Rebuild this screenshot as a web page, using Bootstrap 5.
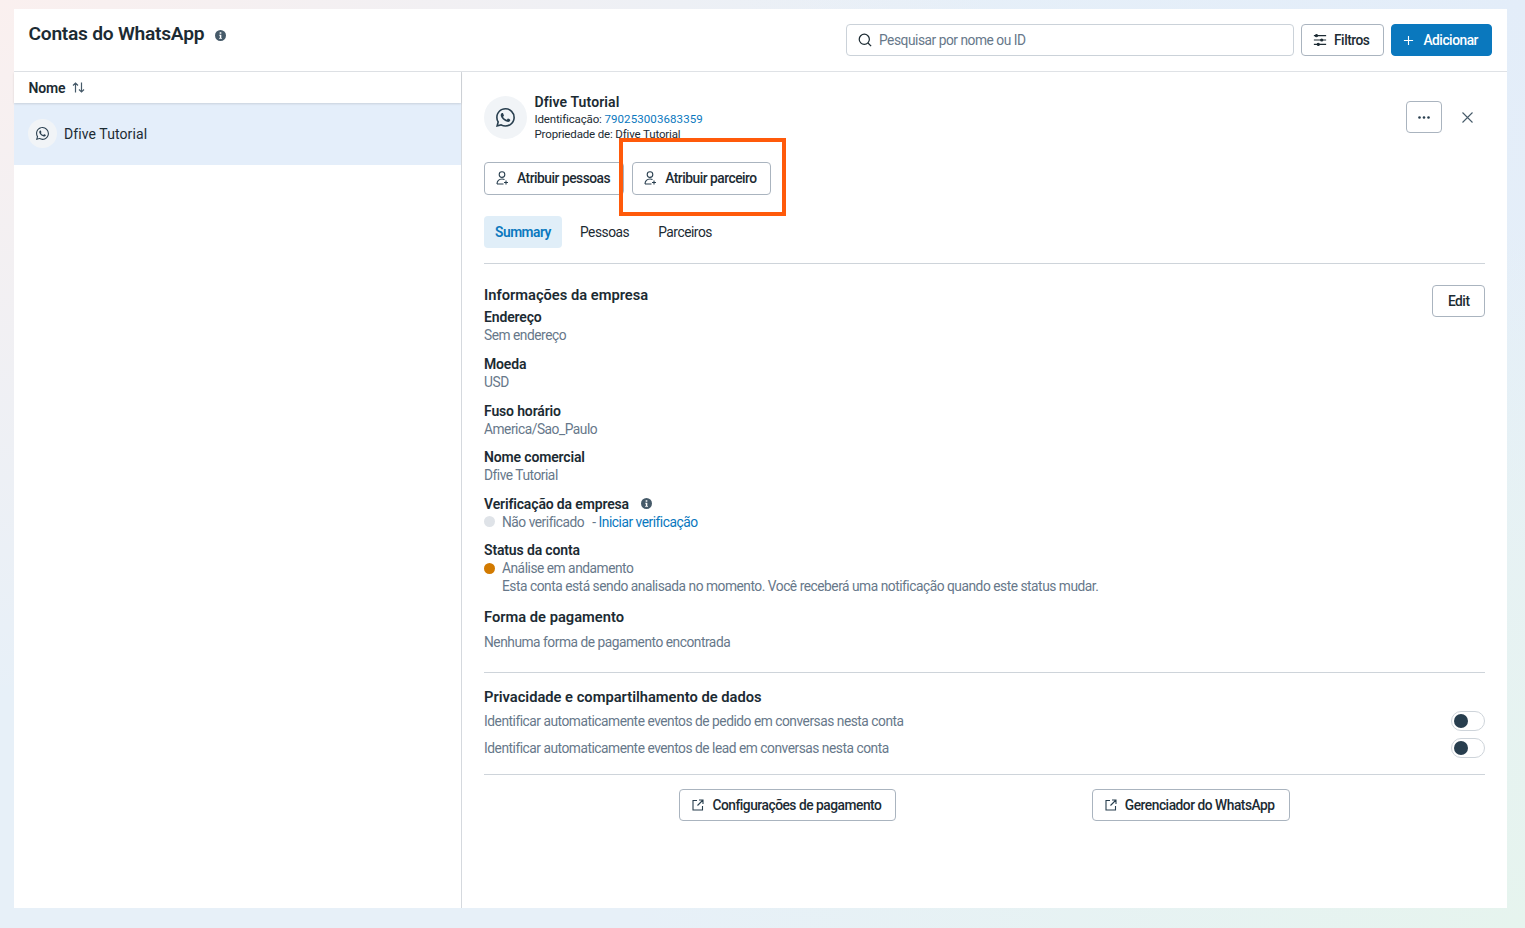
<!DOCTYPE html>
<html lang="pt-BR">
<head>
<meta charset="utf-8">
<title>Contas do WhatsApp</title>
<link href="https://cdn.jsdelivr.net/npm/bootstrap@5.3.0/dist/css/bootstrap.min.css" rel="stylesheet">
<style>
html,body{height:100%}
body{font-family:Roboto,"Noto Sans",sans-serif;font-size:13.75px;line-height:18px;letter-spacing:-.47px;color:#1c2b33;padding:9px 18px 20px 14px;overflow:hidden;
 background:radial-gradient(1000px 700px at 0 0,#faf0ef,transparent),radial-gradient(900px 700px at 100% 100%,#e6f4ee,transparent),radial-gradient(800px 600px at 100% 0,#e3edf9,transparent),#e7f0f8}
.panel{height:899px;background:#fff;position:relative}
.top-bar{height:63px;border-bottom:1px solid #dfe2e6;padding:15px 15px 0 14.5px}
.title-wrap{gap:11px}
.page-title{font-size:19.2px;line-height:20px;font-weight:600;letter-spacing:-.25px;margin:0}
.title-info{margin-top:3px}
.top-tools{gap:7px}
.search-box{width:448px;height:32px;border:1px solid #cbd2d9;border-radius:4px;padding:0 11px;color:#67788a}
.search-box svg{margin-right:-1px}
.act-btn{height:32px;display:inline-flex;align-items:center;gap:8px;padding:0 13px 0 11px;font-size:13.75px;line-height:18px;letter-spacing:-.47px;font-weight:500;color:#1c2b33;background:#fff;border:1px solid #aab4bf;border-radius:4px}
.act-btn:hover{color:#1c2b33;background:#fff;border-color:#aab4bf}
.btn-filter{padding:0 14px 0 11px;gap:7px}
.add-btn{background:#0a78be;border-color:#0a78be;color:#fff;gap:9px}
.add-btn:hover{background:#0a78be;border-color:#0a78be;color:#fff}
.btn-tall{height:33px}
.btn-square{width:36px;padding:0;justify-content:center}
.btn-edit{padding:0 14.5px}
.btn-out{padding:0 14px 0 12px}
.side{width:448px;border-right:1px solid #d5d9de}
.side-head{height:31px;padding-left:14.5px;font-size:14px;letter-spacing:-.2px;font-weight:600;box-shadow:0 1px 2px rgba(0,0,0,.12);position:relative;gap:7px}
.side-row{height:62px;background:#e4eefa;padding:0 0 1px 14px;gap:7px;color:#1c2b33;font-size:14px;letter-spacing:.1px}
.wa-small{width:29px;height:29px;border-radius:50%;background:#f1f4f7}
.detail{padding:24px 22px 0;position:relative}
.acct-head{gap:7.5px}
.wa-big{width:43px;height:43px;border-radius:50%;background:#f1f4f7}
.acct-name{font-size:14px;font-weight:600;letter-spacing:.1px;line-height:16px;margin:-2px 0 1.5px}
.acct-meta{font-size:11.5px;line-height:15px;letter-spacing:-.15px}
.acct-meta a{letter-spacing:.1px}
.acct-meta a,.blue-link{color:#0a78be;text-decoration:none}
.head-tools{margin:5px 12px 0 0;gap:20px}
.assign-row{margin-top:20px;gap:8px}
.marker{position:absolute;left:157px;top:66px;width:167px;height:78px;border:4px solid #ff5a0a;pointer-events:none}
.tabs-row{margin-top:21px;padding-bottom:15px;border-bottom:1px solid #ced4da}
.tab-item{height:32px;display:flex;align-items:center;color:#1c2b33;text-decoration:none}
.tab-on{width:78px;justify-content:center;background:#e0eef8;color:#0a78be;font-weight:600;border-radius:4px;margin-right:18px}
.tab-two{margin-right:29px}
.info-zone{padding-top:21px;position:relative}
.edit-pos{position:absolute;right:0;top:21px}
.sec-title{font-weight:600;line-height:20px;font-size:14.7px;letter-spacing:0}
.fld{margin-bottom:10.6px}
.fld-first{margin:3px 0 11.600px}
.fld-name{font-size:14px;font-weight:600;letter-spacing:-.15px;line-height:18px}
.fld-val{color:#67788a;line-height:18px}
.dot{width:11px;height:11px;border-radius:50%;margin-right:7px;flex:none}
.dot-grey{background:#dfe3e8}
.dot-orange{background:#d27a00}
.indent{padding-left:18px}
.pay-title{margin-top:12px}
.pay-val{margin-top:6px}
.rule{border-top:1px solid #ced4da}
.rule-privacy{margin-top:21px;padding-top:14px}
.rule-links{margin-top:13px;padding-top:14px}
.toggle-row{height:27px}
.sw{width:34px;height:20px;border:1px solid #ced4da;border-radius:10px;padding:2px 0 0 2px;background:#fff}
.sw-knob{width:14px;height:14px;border-radius:50%;background:#283e4e;display:block}
.svg-ico{display:block;flex:none}
.detail-body{height:836px}
</style>
</head>
<body>
<div class="panel">
  <header class="top-bar d-flex justify-content-between align-items-start">
    <div class="title-wrap d-flex align-items-center">
      <h1 class="page-title">Contas do WhatsApp</h1>
      <svg class="svg-ico title-info" width="11" height="11" viewBox="0 0 16 16" fill="#465a69"><path d="M8 0a8 8 0 1 0 0 16A8 8 0 0 0 8 0zm1.200 3.400v2.100H6.800V3.400zM6.200 7h3v4.600h1v1.300H6v-1.300h1V8.300h-.8z"/></svg>
    </div>
    <div class="top-tools d-flex align-items-center">
      <div class="search-box d-flex align-items-center gap-2">
        <svg class="svg-ico" width="14" height="14" viewBox="0 0 16 16" fill="none" stroke="#1c2b33" stroke-width="1.4"><circle cx="7.200" cy="7.200" r="5.800"/><path d="M11.400 11.400 15 15"/></svg>
        <span>Pesquisar por nome ou ID</span>
      </div>
      <button class="btn act-btn btn-filter" type="button">
        <svg class="svg-ico" width="14" height="14" viewBox="0 0 16 16" fill="#1c2b33" stroke="#1c2b33" stroke-width="1.200"><path d="M1 3h14M1 8h14M1 13h14"/><circle cx="4" cy="3" r="1.200"/><circle cx="10" cy="8" r="1.200"/><circle cx="6" cy="13" r="1.200"/></svg>
        Filtros
      </button>
      <button class="btn act-btn add-btn" type="button">
        <svg class="svg-ico" width="11" height="11" viewBox="0 0 12 12" stroke="#fff" stroke-width="1.200"><path d="M6 1v10M1 6h10"/></svg>
        Adicionar
      </button>
    </div>
  </header>

  <div class="detail-body d-flex">
    <aside class="side flex-shrink-0">
      <div class="side-head d-flex align-items-center">
        <span>Nome</span>
        <svg class="svg-ico" width="13" height="11" viewBox="0 0 13 11" fill="none" stroke="#465a69" stroke-width="1.200"><path d="M3.500 10.500V1M1 3.500 3.500 1 6 3.500M9.500 .5V10M7 7.500 9.500 10 12 7.500"/></svg>
      </div>
      <div class="side-row d-flex align-items-center">
        <span class="wa-small d-flex align-items-center justify-content-center">
          <svg class="svg-ico" width="13" height="13" viewBox="0 0 16 16" fill="#283e4e"><path d="M13.601 2.326A7.854 7.854 0 0 0 7.994 0C3.627 0 .068 3.558.064 7.926c0 1.399.366 2.76 1.057 3.965L0 16l4.204-1.102a7.933 7.933 0 0 0 3.79.965h.004c4.368 0 7.926-3.558 7.93-7.93A7.898 7.898 0 0 0 13.6 2.326zM7.994 14.521a6.573 6.573 0 0 1-3.356-.92l-.24-.144-2.494.654.666-2.433-.156-.251a6.56 6.56 0 0 1-1.007-3.505c0-3.626 2.957-6.584 6.591-6.584a6.56 6.56 0 0 1 4.66 1.931 6.557 6.557 0 0 1 1.928 4.66c-.004 3.639-2.961 6.592-6.592 6.592zm3.615-4.934c-.197-.099-1.17-.578-1.353-.646-.182-.065-.315-.099-.445.099-.133.197-.513.646-.627.775-.114.133-.232.148-.43.05-.197-.1-.836-.308-1.592-.985-.59-.525-.985-1.175-1.103-1.372-.114-.198-.011-.304.088-.403.087-.088.197-.232.296-.346.1-.114.133-.198.198-.33.065-.134.034-.248-.015-.347-.05-.099-.445-1.076-.612-1.47-.16-.389-.323-.335-.445-.34-.114-.007-.247-.007-.38-.007a.729.729 0 0 0-.529.247c-.182.198-.691.677-.691 1.654 0 .977.71 1.916.81 2.049.098.133 1.394 2.132 3.383 2.992.47.205.84.326 1.129.418.475.152.904.129 1.246.08.38-.058 1.171-.48 1.338-.943.164-.464.164-.86.114-.943-.049-.084-.182-.133-.38-.232z"/></svg>
        </span>
        <span>Dfive Tutorial</span>
      </div>
    </aside>

    <main class="detail flex-grow-1">
      <div class="d-flex justify-content-between align-items-start">
        <div class="acct-head d-flex">
          <span class="wa-big d-flex align-items-center justify-content-center">
            <svg class="svg-ico" width="19" height="19" viewBox="0 0 16 16" fill="#283e4e"><path d="M13.601 2.326A7.854 7.854 0 0 0 7.994 0C3.627 0 .068 3.558.064 7.926c0 1.399.366 2.76 1.057 3.965L0 16l4.204-1.102a7.933 7.933 0 0 0 3.79.965h.004c4.368 0 7.926-3.558 7.93-7.93A7.898 7.898 0 0 0 13.6 2.326zM7.994 14.521a6.573 6.573 0 0 1-3.356-.92l-.24-.144-2.494.654.666-2.433-.156-.251a6.56 6.56 0 0 1-1.007-3.505c0-3.626 2.957-6.584 6.591-6.584a6.56 6.56 0 0 1 4.66 1.931 6.557 6.557 0 0 1 1.928 4.66c-.004 3.639-2.961 6.592-6.592 6.592zm3.615-4.934c-.197-.099-1.17-.578-1.353-.646-.182-.065-.315-.099-.445.099-.133.197-.513.646-.627.775-.114.133-.232.148-.43.05-.197-.1-.836-.308-1.592-.985-.59-.525-.985-1.175-1.103-1.372-.114-.198-.011-.304.088-.403.087-.088.197-.232.296-.346.1-.114.133-.198.198-.33.065-.134.034-.248-.015-.347-.05-.099-.445-1.076-.612-1.47-.16-.389-.323-.335-.445-.34-.114-.007-.247-.007-.38-.007a.729.729 0 0 0-.529.247c-.182.198-.691.677-.691 1.654 0 .977.71 1.916.81 2.049.098.133 1.394 2.132 3.383 2.992.47.205.84.326 1.129.418.475.152.904.129 1.246.08.38-.058 1.171-.48 1.338-.943.164-.464.164-.86.114-.943-.049-.084-.182-.133-.38-.232z"/></svg>
          </span>
          <div>
            <div class="acct-name">Dfive Tutorial</div>
            <div class="acct-meta">Identificação: <a href="#">790253003683359</a></div>
            <div class="acct-meta">Propriedade de: Dfive Tutorial</div>
          </div>
        </div>
        <div class="head-tools d-flex align-items-center">
          <button class="btn act-btn btn-square" type="button" aria-label="Mais">
            <svg class="svg-ico" width="12" height="3" viewBox="0 0 12 3" fill="#283e4e"><circle cx="1.500" cy="1.500" r="1.300"/><circle cx="6" cy="1.500" r="1.300"/><circle cx="10.500" cy="1.500" r="1.300"/></svg>
          </button>
          <svg class="svg-ico" width="11" height="11" viewBox="0 0 11 11" stroke="#465a69" stroke-width="1.100"><path d="m.5.5 10 10M10.500.5l-10 10"/></svg>
        </div>
      </div>

      <div class="assign-row d-flex">
        <button class="btn act-btn btn-tall" type="button">
          <svg class="svg-ico" width="13" height="14" viewBox="0 0 13 14" fill="none" stroke="#283e4e" stroke-width="1.100"><circle cx="6" cy="3.600" r="2.800"/><path d="M1 13c0-3 2-5 5-5 1 0 1.800.2 2.500.6M1 13h6.500M10 9.500v4M8 11.500h4"/></svg>
          Atribuir pessoas
        </button>
        <button class="btn act-btn btn-tall" type="button">
          <svg class="svg-ico" width="13" height="14" viewBox="0 0 13 14" fill="none" stroke="#283e4e" stroke-width="1.100"><circle cx="6" cy="3.600" r="2.800"/><path d="M1 13c0-3 2-5 5-5 1 0 1.800.2 2.500.6M1 13h6.500M10 9.500v4M8 11.500h4"/></svg>
          Atribuir parceiro
        </button>
      </div>
      <div class="marker"></div>

      <nav class="tabs-row d-flex">
        <a class="tab-item tab-on" href="#">Summary</a>
        <a class="tab-item tab-two" href="#">Pessoas</a>
        <a class="tab-item" href="#">Parceiros</a>
      </nav>

      <section class="info-zone">
        <button class="btn act-btn btn-edit edit-pos" type="button">Edit</button>
        <div class="sec-title">Informações da empresa</div>
        <div class="fld fld-first"><div class="fld-name">Endereço</div><div class="fld-val">Sem endereço</div></div>
        <div class="fld"><div class="fld-name">Moeda</div><div class="fld-val">USD</div></div>
        <div class="fld"><div class="fld-name">Fuso horário</div><div class="fld-val">America/Sao_Paulo</div></div>
        <div class="fld"><div class="fld-name">Nome comercial</div><div class="fld-val">Dfive Tutorial</div></div>
        <div class="fld">
          <div class="fld-name d-flex align-items-center gap-2">Verificação da empresa
            <svg class="svg-ico ms-1" width="11" height="11" viewBox="0 0 16 16" fill="#465a69"><path d="M8 0a8 8 0 1 0 0 16A8 8 0 0 0 8 0zm1.200 3.400v2.100H6.800V3.400zM6.200 7h3v4.600h1v1.300H6v-1.300h1V8.300h-.8z"/></svg>
          </div>
          <div class="fld-val d-flex align-items-center"><span class="dot dot-grey"></span>Não verificado<span class="ms-2">-&nbsp;<a class="blue-link" href="#">Iniciar verificação</a></span></div>
        </div>
        <div class="fld">
          <div class="fld-name">Status da conta</div>
          <div class="fld-val d-flex align-items-center"><span class="dot dot-orange"></span>Análise em andamento</div>
          <div class="fld-val indent">Esta conta está sendo analisada no momento. Você receberá uma notificação quando este status mudar.</div>
        </div>
        <div class="sec-title pay-title">Forma de pagamento</div>
        <div class="fld-val pay-val">Nenhuma forma de pagamento encontrada</div>
      </section>

      <div class="rule rule-privacy">
        <div class="sec-title">Privacidade e compartilhamento de dados</div>
        <div class="toggle-row d-flex justify-content-between align-items-center fld-val">
          <span>Identificar automaticamente eventos de pedido em conversas nesta conta</span>
          <span class="sw"><span class="sw-knob"></span></span>
        </div>
        <div class="toggle-row d-flex justify-content-between align-items-center fld-val">
          <span>Identificar automaticamente eventos de lead em conversas nesta conta</span>
          <span class="sw"><span class="sw-knob"></span></span>
        </div>
      </div>

      <div class="rule rule-links d-flex justify-content-evenly">
        <button class="btn act-btn btn-out" type="button">
          <svg class="svg-ico" width="12" height="12" viewBox="0 0 12 12" fill="none" stroke="#283e4e" stroke-width="1.100"><path d="M5 1.500H1v9.500h9.500V7M7 1h4v4M11 1 5.500 6.500"/></svg>
          Configurações de pagamento
        </button>
        <button class="btn act-btn btn-out" type="button">
          <svg class="svg-ico" width="12" height="12" viewBox="0 0 12 12" fill="none" stroke="#283e4e" stroke-width="1.100"><path d="M5 1.500H1v9.500h9.500V7M7 1h4v4M11 1 5.500 6.500"/></svg>
          Gerenciador do WhatsApp
        </button>
      </div>
    </main>
  </div>
</div>
<script src="https://cdn.jsdelivr.net/npm/bootstrap@5.3.0/dist/js/bootstrap.bundle.min.js"></script>
</body>
</html>
